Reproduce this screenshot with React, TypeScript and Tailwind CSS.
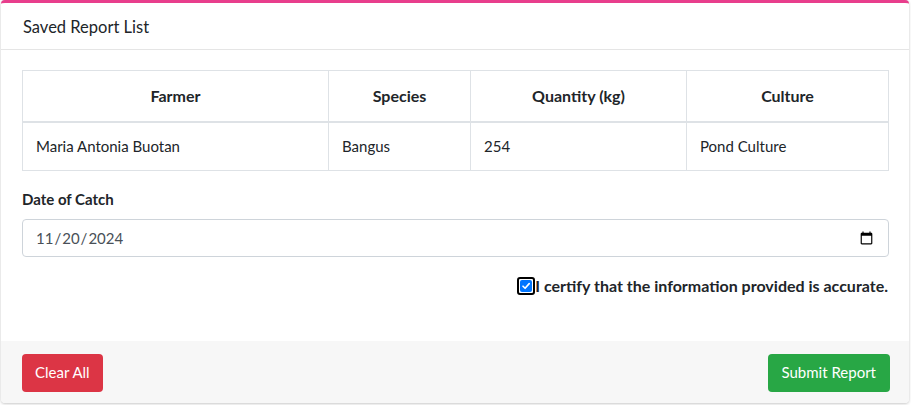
import React from "react";

export default function App() {
  return (
    <div className="w-[911px] h-[405px] bg-white" style={{ fontFamily: "Lato, 'Noto Sans', sans-serif" }}>
      <div className="ml-[1px] mr-[2px] w-[908px] h-[403px] bg-white border-t-[3px] border-[#e83e8c] rounded-[4px] shadow-[0_0_1px_rgba(0,0,0,0.125),0_1px_3px_rgba(0,0,0,0.2)] flex flex-col overflow-hidden">
        <div className="h-[47px] border-b border-[#e5e5e5] px-[22px] flex items-center">
          <span className="text-[16.5px] text-[#212529] mt-[2px]">Saved Report List</span>
        </div>
        <div className="flex-1 px-[21px] pt-[20px]">
          <table className="w-[867px] border-collapse text-[15px] text-[#212529]">
            <thead>
              <tr className="h-[51px] text-[16px]">
                <th className="w-[306px] border border-[#dee2e6] border-b-2 font-bold">Farmer</th>
                <th className="w-[142px] border border-[#dee2e6] border-b-2 font-bold">Species</th>
                <th className="w-[216px] border border-[#dee2e6] border-b-2 font-bold">Quantity (kg)</th>
                <th className="border border-[#dee2e6] border-b-2 font-bold">Culture</th>
              </tr>
            </thead>
            <tbody>
              <tr className="h-[49px]">
                <td className="border border-[#dee2e6] px-[13px]">Maria Antonia Buotan</td>
                <td className="border border-[#dee2e6] px-[13px]">Bangus</td>
                <td className="border border-[#dee2e6] px-[13px]">254</td>
                <td className="border border-[#dee2e6] px-[13px]">Pond Culture</td>
              </tr>
            </tbody>
          </table>
          <div className="mt-[18px] text-[15px] font-bold text-[#212529] leading-[20px]">Date of Catch</div>
          <input
            type="date"
            defaultValue="2024-11-20"
            className="mt-[10px] block w-[867px] h-[38px] border border-[#ced4da] rounded-[4px] px-[12px] text-[15px] text-[#495057] outline-none"
          />
          <div className="mt-[19px] flex justify-end items-center leading-[20px]">
            <span className="w-[18px] h-[18px] rounded-[3px] border-2 border-black flex items-center justify-center bg-white">
              <span className="w-[12px] h-[12px] rounded-[2px] bg-[#0075ff] flex items-center justify-center">
                <svg width="10" height="10" viewBox="0 0 10 10">
                  <path d="M2 5.2 L4.1 7.3 L8.2 2.6" stroke="white" strokeWidth="1.6" fill="none" strokeLinecap="round" strokeLinejoin="round" />
                </svg>
              </span>
            </span>
            <span className="text-[16px] font-bold text-[#212529]">I certify that the information provided is accurate.</span>
          </div>
        </div>
        <div className="h-[62px] bg-[#f7f7f7] pl-[21px] pr-[19px] flex items-center justify-between">
          <button className="mt-[1px] h-[38px] px-[13px] rounded-[4px] bg-[#dc3545] text-white text-[15px]">Clear All</button>
          <button className="mt-[1px] h-[38px] px-[14px] rounded-[4px] bg-[#28a745] text-white text-[15px]">Submit Report</button>
        </div>
      </div>
    </div>
  );
}
